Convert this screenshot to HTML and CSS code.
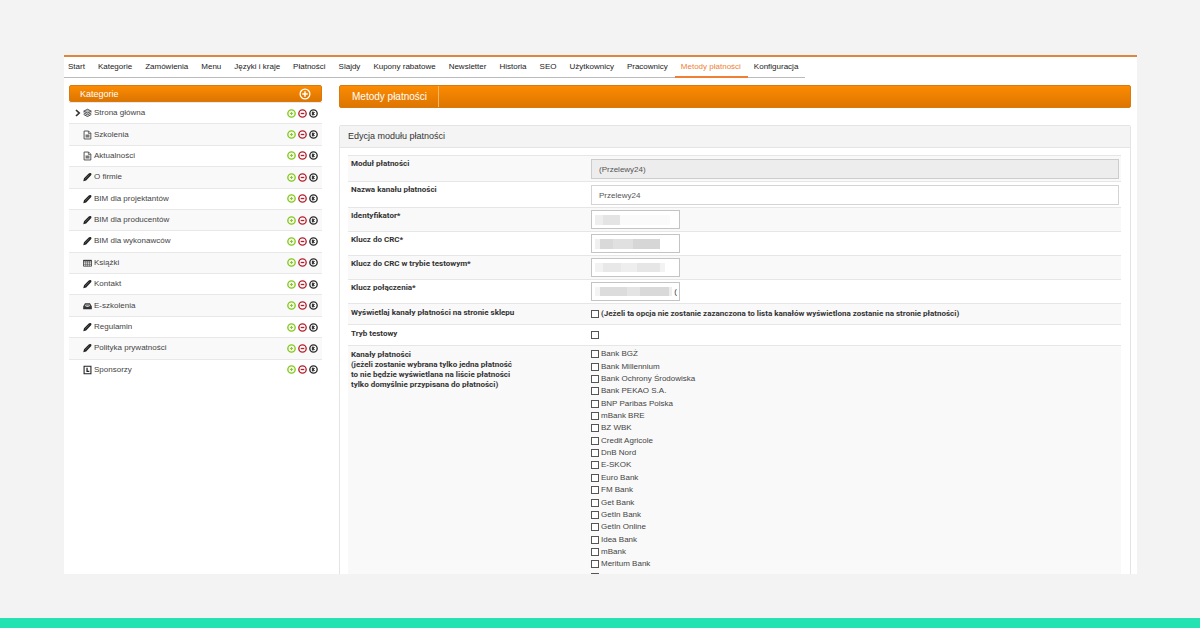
FILE: index.html
```html
<!DOCTYPE html>
<html lang="pl">
<head>
<meta charset="utf-8">
<title>Metody płatności</title>
<link rel="stylesheet" href="styles.css">
</head>
<body>
<svg class="sprite" aria-hidden="true">
  <symbol id="i-chevron" viewBox="0 0 6 8"><path d="M1 1l3.2 3L1 7" fill="none" stroke="#333" stroke-width="1.7"/></symbol>
  <symbol id="i-layers" viewBox="0 0 10 10"><path d="M5 .8L9.3 3 5 5.2.7 3z" fill="#bbb" stroke="#444" stroke-width="1"/><path d="M.7 4.8L5 7l4.3-2.2M.7 6.6L5 8.9l4.3-2.3" fill="none" stroke="#444" stroke-width="1.1"/></symbol>
  <symbol id="i-doc" viewBox="0 0 10 10"><path d="M1.2.6h5l2.5 2.5v6.3H1.2z" fill="#fff" stroke="#444" stroke-width="1"/><path d="M6 .6v2.7h2.7" fill="none" stroke="#444" stroke-width=".8"/><path d="M2.8 4.4h4.4v3.4H2.8z" fill="#777"/></symbol>
  <symbol id="i-pen" viewBox="0 0 10 10"><path d="M.3 9.700l.8-3.300L6.400 1.100c.8-.8 1.700-.9 2.500-.2s.6 1.700-.2 2.500L3.500 8.800z" fill="#222"/><path d="M2.300 7.300l4.600-4.500" stroke="#999" stroke-width=".5"/></symbol>
  <symbol id="i-table" viewBox="0 0 10 10"><path d="M.5 2h9v6.500h-9z" fill="#fff" stroke="#444"/><path d="M.5 2.500h9" stroke="#333" stroke-width="1.500"/><path d="M3 2v6.500M5 2v6.500M7.200 2v6.500M.5 4.800h9M.5 6.600h9" stroke="#555" stroke-width=".7"/></symbol>
  <symbol id="i-inbox" viewBox="0 0 10 10"><path d="M2.200 2h5.600L9.800 5.500v3H.2v-3z" fill="#333"/><path d="M2.800 3.200h4.400l1 2H6.600l-.6 1H4l-.6-1H1.800z" fill="#ccc"/><path d="M3 4.200h4" stroke="#444" stroke-width=".7"/></symbol>
  <symbol id="i-badge" viewBox="0 0 10 10"><path d="M1.200.8h7.600v8.400H1.200z" fill="#fff" stroke="#222" stroke-width="1.200"/><path d="M3.800 2.500h1.400V5.800H7v1.400H3.800z" fill="#222"/></symbol>
  <symbol id="i-add" viewBox="0 0 10 10"><circle cx="5" cy="5" r="4.100" fill="#f4fbe6" stroke="#85c81f" stroke-width="1.500"/><path d="M3.400 5h3.200M5 3.400v3.200" stroke="#8bc53b" stroke-width="1.200"/></symbol>
  <symbol id="i-del" viewBox="0 0 10 10"><circle cx="5" cy="5" r="4.100" fill="#fff" stroke="#b3202c" stroke-width="1.500"/><path d="M3 5h4" stroke="#b3202c" stroke-width="1.500"/></symbol>
  <symbol id="i-off" viewBox="0 0 10 10"><circle cx="5" cy="5" r="4.100" fill="#fff" stroke="#2a2a2a" stroke-width="1.500"/><path d="M3.700 3.200h1.200v3.600H3.700zM4.900 5l1.600-1.600M4.900 5l1.600 1.600" fill="#222" stroke="#222" stroke-width=".8"/></symbol>
  <symbol id="i-plus" viewBox="0 0 12 12"><circle cx="6" cy="6" r="4.900" fill="none" stroke="#fff" stroke-width="1.300"/><path d="M3.300 6h5.400M6 3.300v5.400" stroke="#fff" stroke-width="1.500"/></symbol>
</svg>
<main class="app">
  <nav class="nav">
    <a href="#">Start</a><a href="#">Kategorie</a><a href="#">Zamówienia</a><a href="#">Menu</a><a href="#">Języki i kraje</a><a href="#">Płatności</a><a href="#">Slajdy</a><a href="#">Kupony rabatowe</a><a href="#">Newsletter</a><a href="#">Historia</a><a href="#">SEO</a><a href="#">Użytkownicy</a><a href="#">Pracownicy</a><a href="#" class="active">Metody płatności</a><a href="#">Konfiguracja</a>
  </nav>
  <div class="columns">
    <aside class="sidebar">
      <header class="side-head"><h2>Kategorie</h2><button aria-label="Dodaj kategorię"><svg><use href="#i-plus"/></svg></button></header>
      <ul class="tree" id="tree"></ul>
    </aside>
    <section class="content">
      <header class="title-bar"><h1>Metody płatności</h1></header>
      <form class="panel">
        <h2 class="panel-head">Edycja modułu płatności</h2>
        <div class="panel-body">
          <table class="form">
            <colgroup><col class="col-label"><col></colgroup>
            <tr class="wide"><th><label for="f1">Moduł płatności</label></th><td><input id="f1" class="text" value="(Przelewy24)" disabled></td></tr>
            <tr class="wide"><th><label for="f2">Nazwa kanału płatności</label></th><td><input id="f2" class="text" value="Przelewy24"></td></tr>
            <tr class="short"><th><label for="f3">Identyfikator*</label></th><td><input id="f3" class="key key-id"></td></tr>
            <tr class="short"><th><label for="f4">Klucz do CRC*</label></th><td><input id="f4" class="key key-crc"></td></tr>
            <tr class="short"><th><label for="f5">Klucz do CRC w trybie testowym*</label></th><td><input id="f5" class="key key-test"></td></tr>
            <tr class="short"><th><label for="f6">Klucz połączenia*</label></th><td><input id="f6" class="key key-link" value="("></td></tr>
            <tr class="check"><th>Wyświetlaj kanały płatności na stronie sklepu</th><td><label class="option strong"><input type="checkbox">(Jeżeli ta opcja nie zostanie zazanczona to lista kanałów wyświetlona zostanie na stronie płatności)</label></td></tr>
            <tr class="check"><th><label for="f8">Tryb testowy</label></th><td><div class="option"><input type="checkbox" id="f8"></div></td></tr>
            <tr class="banks"><th>Kanały płatności<br>(jeżeli zostanie wybrana tylko jedna płatność<br>to nie będzie wyświetlana na liście płatności<br>tylko domyślnie przypisana do płatności)</th><td><ul class="bank-list" id="banks"></ul></td></tr>
          </table>
        </div>
      </form>
    </section>
  </div>
</main>
<footer class="strip"></footer>
<script src="app.js"></script>
</body>
</html>
```
FILE: styles.css
```css
* { box-sizing: border-box; }
body {
  margin: 0;
  height: 100vh;
  display: flex;
  flex-direction: column;
  background: #f3f3f3;
  color: #333;
  font: 8px/10px "Liberation Sans", Arial, sans-serif;
}
h1, h2, ul { margin: 0; padding: 0; font-weight: normal; list-style: none; }
button { padding: 0; border: 0; background: none; display: flex; cursor: pointer; }
input { margin: 0; font: inherit; color: inherit; }
.sprite { position: absolute; width: 0; height: 0; }
.app {
  flex: 1;
  min-height: 0;
  margin: 55px 63px 44px 64px;
  overflow: hidden;
  background: #fff;
  border-top: 2px solid #e0853f;
}
.strip { height: 10px; background: #25e2b2; }

.nav { display: flex; width: max-content; }
.nav a {
  padding: 5px 7px 4px 6px;
  border-bottom: 1px solid #bbb;
  color: #222;
  text-decoration: none;
  white-space: nowrap;
}
.nav a:first-child { padding-left: 4px; }
.nav a.active { color: #ee7f35; border-bottom: 2px solid #ee7f35; }

.columns { display: flex; gap: 17px; padding: 7px 6px 0 5px; align-items: flex-start; }
.sidebar { flex: 0 0 253px; }
.side-head, .title-bar {
  display: flex;
  align-items: center;
  color: #fff;
  background: linear-gradient(#fb8b02, #dd7500);
  border: 1px solid #d97a10;
  border-radius: 2px;
}
.side-head { height: 17px; justify-content: space-between; padding: 0 10px; }
.side-head h2 { font-size: 9px; }
.side-head svg { width: 12px; height: 12px; }
.tree { display: grid; grid-auto-rows: 1fr; height: 278px; }
.tree li {
  display: flex;
  align-items: center;
  gap: 2px;
  padding: 0 4px 0 6px;
  border-top: 1px solid #e8e8e8;
}
.tree li:nth-child(even) { background: #f9f9f9; }
.tree a { flex: 1; color: #444; text-decoration: none; }
.tree svg { width: 9px; height: 9px; }
.tree .kind { height: 10px; }
.tree .fold { width: 6px; height: 8px; }

.content { flex: 1; min-width: 0; }
.title-bar { height: 23px; }
.title-bar h1 {
  font-size: 10px;
  line-height: 21px;
  padding: 0 11px 0 12px;
  border-right: 1px solid #f7b566;
}
.panel { margin-top: 17px; border: 1px solid #e4e4e4; border-radius: 2px; }
.panel-head { padding: 0 8px; font-size: 9px; line-height: 21px; background: #f4f4f4; border-bottom: 1px solid #e4e4e4; }
.panel-body { padding: 7px 9px 7px 8px; }

.form { width: 100%; table-layout: fixed; border-collapse: separate; border-spacing: 0; }
.col-label { width: 243px; }
.form th, .form td { padding: 3px 2px 0 0; vertical-align: top; text-align: left; border-top: 1px solid #e6e6e6; }
.form th { padding-left: 3px; }
.form th, .strong { font-family: Roboto, "Liberation Sans", sans-serif; font-weight: bold; }
.form tr:nth-child(odd) > * { background: #f9f9f9; }
.wide { height: 26px; }
.short { height: 24px; }
.check { height: 21px; }
.form .check > *, .form .banks > th { padding-top: 4px; }
.text { display: block; width: 100%; height: 20px; padding: 0 7px; color: #555; background: #fff; border: 1px solid #d4d4d4; }
.text:disabled { background: #ededed; border-color: #ccc; }
.form .short td, .form .banks > td { padding-top: 2px; }
.key { display: block; width: 89px; height: 19px; padding: 0 2px; background: #fff no-repeat 3px 4px; border: 1px solid #c4c4c4; text-align: right; }
.key-id { background-image: linear-gradient(90deg, #eee 0 8px, #e4e4e4 8px 25px, #fafafa 25px); background-size: 75px 10px; }
.key-crc { background-image: linear-gradient(90deg, #f0f0f0 0 5px, #d9d9d9 5px 18px, #e0e0e0 18px 38px, #d6d6d6 38px); background-size: 65px 10px; }
.key-test { background-image: linear-gradient(90deg, #f2f2f2 0 8px, #e8e8e8 8px 26px, #eee 26px 42px, #e6e6e6 42px 65px, #f3f3f3 65px); background-size: 70px 9px; }
.key-link { background-image: linear-gradient(90deg, #f4f4f4 0 5px, #dcdcdc 5px 32px, #e4e4e4 32px 45px, #d9d9d9 45px 74px, #eee 74px); background-size: 77px 9px; }

.option { display: flex; align-items: center; gap: 2px; height: 12px; }
input[type="checkbox"] { appearance: none; width: 8px; height: 8px; border: 1px solid #555; background: #fff; }
input[type="checkbox"]:checked { background: #555; }
.bank-list { display: grid; grid-auto-rows: 1fr; height: 235px; color: #444; }
.bank-list .option { height: 100%; }
```
FILE: app.js
```javascript
const icon = (name, cls = "") => `<svg class="${cls}" aria-hidden="true"><use href="#i-${name}"/></svg>`;

const pages = [
  ["layers", "Strona główna"], ["doc", "Szkolenia"], ["doc", "Aktualności"], ["pen", "O firmie"],
  ["pen", "BIM dla projektantów"], ["pen", "BIM dla producentów"], ["pen", "BIM dla wykonawców"],
  ["table", "Książki"], ["pen", "Kontakt"], ["inbox", "E-szkolenia"], ["pen", "Regulamin"],
  ["pen", "Polityka prywatności"], ["badge", "Sponsorzy"]
];
document.getElementById("tree").innerHTML = pages.map(([kind, name], i) => `<li>
  ${i === 0 ? icon("chevron", "fold") : '<span class="fold"></span>'}${icon(kind, "kind")}<a href="#">${name}</a>
  <button aria-label="Dodaj: ${name}">${icon("add")}</button><button aria-label="Usuń: ${name}">${icon("del")}</button><button aria-label="Wyłącz: ${name}">${icon("off")}</button>
</li>`).join("");

const banks = ["Bank BGŻ", "Bank Millennium", "Bank Ochrony Środowiska", "Bank PEKAO S.A.", "BNP Paribas Polska",
  "mBank BRE", "BZ WBK", "Credit Agricole", "DnB Nord", "E-SKOK", "Euro Bank", "FM Bank", "Get Bank",
  "GetIn Bank", "GetIn Online", "Idea Bank", "mBank", "Meritum Bank", "mBank mTransfer"];
document.getElementById("banks").innerHTML = banks.map(b =>
  `<li><label class="option"><input type="checkbox">${b}</label></li>`).join("");
```
